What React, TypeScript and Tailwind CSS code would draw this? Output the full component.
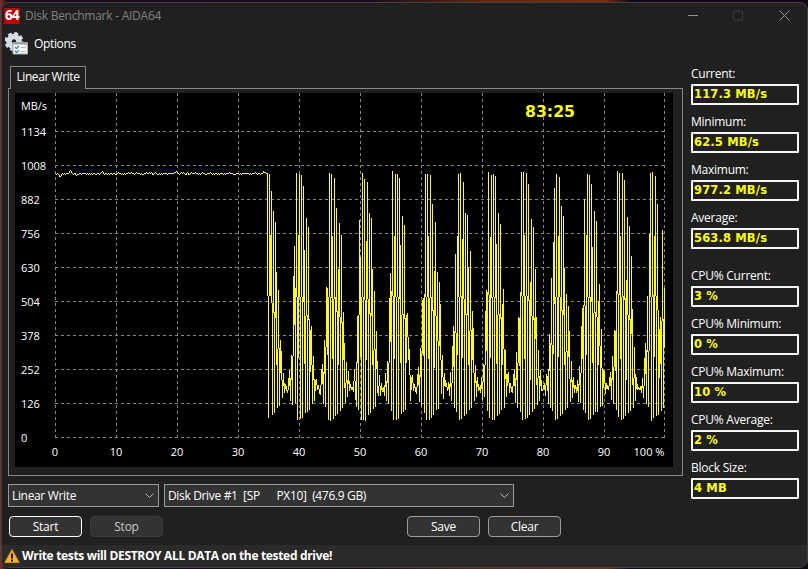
// y position of the graph for every pixel column, starting at x = 55
const steady: number[] = [
  173, 174, 173, 174, 176, 177, 174, 173, 174, 173, 174, 173, 173, 174, 172, 170, 172, 173, 174, 173,
  173, 176, 174, 174, 173, 173, 174, 173, 173, 173, 173, 174, 173, 174, 173, 174, 173, 174, 173, 173,
  174, 174, 173, 173, 174, 173, 172, 171, 173, 174, 173, 173, 174, 173, 174, 173, 173, 174, 173, 173,
  174, 174, 173, 172, 173, 173, 174, 173, 174, 173, 174, 173, 173, 172, 174, 173, 172, 174, 173, 174,
  173, 172, 174, 173, 173, 174, 173, 174, 175, 173, 173, 172, 174, 173, 172, 173, 172, 174, 175, 173,
  172, 173, 174, 175, 173, 174, 173, 174, 173, 173, 173, 173, 174, 173, 173, 173, 173, 173, 174, 172,
  173, 171, 173, 173, 174, 173, 172, 173, 172, 173, 175, 174, 172, 174, 175, 173, 172, 173, 173, 174,
  172, 174, 173, 174, 173, 174, 173, 172, 173, 173, 174, 175, 173, 173, 174, 172, 173, 174, 173, 174,
  173, 173, 174, 173, 174, 173, 173, 173, 174, 173, 174, 173, 173, 174, 172, 173, 173, 173, 174, 174,
  174, 173, 173, 173, 174, 173, 174, 173, 173, 173, 173, 173, 173, 173, 174, 173, 174, 173, 173, 174,
  172, 173, 174, 173, 173, 174, 173, 174, 171, 173, 172, 173,
];

const bursts: number[] = [
  173, 418, 174, 296, 191, 415, 211, 413, 222, 321, 408, 290, 406, 340, 361, 398, 373, 393, 384, 388,
  393, 386, 370, 401, 355, 405, 306, 246, 403, 173, 420, 296, 174, 419, 175, 418, 186, 314, 413, 218,
  412, 227, 410, 333, 326, 404, 356, 401, 381, 379, 390, 385, 392, 395, 374, 364, 404, 340, 407, 287,
  289, 420, 173, 421, 174, 298, 419, 178, 416, 208, 414, 315, 223, 411, 235, 408, 312, 373, 403, 362,
  397, 371, 391, 384, 390, 387, 392, 369, 393, 407, 316, 410, 220, 293, 420, 173, 420, 179, 421, 299,
  182, 415, 213, 413, 218, 320, 409, 291, 407, 331, 390, 396, 375, 396, 383, 392, 387, 396, 373, 401,
  361, 404, 322, 273, 411, 171, 420, 298, 174, 420, 174, 419, 178, 312, 414, 216, 412, 225, 410, 316,
  313, 360, 349, 401, 378, 375, 391, 384, 390, 394, 380, 367, 402, 348, 406, 302, 298, 413, 174, 420,
  174, 298, 420, 175, 418, 204, 415, 320, 222, 410, 272, 409, 282, 326, 394, 355, 399, 373, 387, 383,
  391, 382, 396, 372, 401, 365, 326, 408, 254, 412, 298, 174, 420, 173, 419, 296, 182, 416, 213, 414,
  215, 319, 410, 251, 408, 311, 344, 401, 365, 397, 377, 391, 387, 393, 377, 400, 364, 397, 332, 290,
  411, 172, 418, 298, 175, 420, 174, 420, 176, 312, 416, 213, 414, 224, 410, 319, 289, 408, 350, 397,
  375, 372, 393, 383, 390, 393, 379, 369, 403, 352, 408, 317, 319, 412, 172, 420, 172, 298, 419, 173,
  418, 184, 415, 345, 219, 412, 227, 409, 269, 365, 405, 350, 401, 370, 390, 391, 387, 383, 396, 374,
  378, 404, 334, 408, 278, 411, 296, 188, 420, 174, 419, 295, 177, 416, 206, 414, 216, 320, 410, 294,
  408, 306, 355, 402, 361, 398, 377, 393, 385, 393, 380, 402, 366, 403, 343, 308, 410, 199, 413, 296,
  174, 420, 175, 419, 184, 310, 415, 211, 412, 221, 412, 318, 284, 407, 329, 406, 370, 371, 394, 383,
  387, 390, 382, 372, 400, 356, 404, 330, 332, 410, 171, 417, 173, 298, 420, 173, 419, 180, 416, 343,
  217, 413, 226, 411, 256, 362, 408, 347, 401, 377, 390, 387, 390, 386, 393, 378, 398, 373, 343, 404,
  296, 407, 295, 173, 421, 172, 418, 296, 176, 416, 204, 415, 340, 317, 411, 230, 408, 288,
];

const samples = [...steady, ...bursts];

// one vertical run per column, meeting its neighbours half way
const graph = samples
  .map((y, i) => {
    const before = Math.round((y + (samples[i - 1] ?? y)) / 2);
    const after = Math.round((y + (samples[i + 1] ?? y)) / 2);
    const top = Math.min(y, before, after);
    const bottom = Math.max(y, before, after);
    return `M${55.5 + i} ${top}V${Math.max(bottom, top + 1)}`;
  })
  .join('');

const columns = [55, 116, 177, 238, 299, 360, 421, 482, 543, 604, 664];
const speeds = [1134, 1008, 882, 756, 630, 504, 378, 252, 126, 0];
const percents = ['0', '10', '20', '30', '40', '50', '60', '70', '80', '90'];

const readings: { label: string; value: string; gap?: boolean }[] = [
  { label: 'Current:', value: '117.3 MB/s' },
  { label: 'Minimum:', value: '62.5 MB/s' },
  { label: 'Maximum:', value: '977.2 MB/s' },
  { label: 'Average:', value: '563.8 MB/s' },
  { label: 'CPU% Current:', value: '3 %', gap: true },
  { label: 'CPU% Minimum:', value: '0 %' },
  { label: 'CPU% Maximum:', value: '10 %' },
  { label: 'CPU% Average:', value: '2 %' },
  { label: 'Block Size:', value: '4 MB' },
];

function Chart() {
  return (
    <svg
      className="block h-[374px] w-[658px] bg-black"
      viewBox="15 93 658 374"
      fontFamily="'Open Sans', 'Noto Sans', sans-serif"
      fontSize="11"
      letterSpacing="0"
    >
      <g stroke="#868686" strokeDasharray="3 3" shapeRendering="crispEdges">
        {columns.map((x) => (
          <path key={x} d={`M${x + 0.5} 93V438`} />
        ))}
        {speeds.map((speed, i) => (
          <path key={speed} d={`M55 ${131.5 + i * 34}H665`} />
        ))}
      </g>
      <path d={graph} stroke="#ffff00" shapeRendering="crispEdges" />
      <g fill="#fff">
        <text x="21" y="110" textLength="26" lengthAdjust="spacingAndGlyphs">MB/s</text>
        {speeds.map((speed, i) => (
          <text key={speed} x="21" y={136 + i * 34}>{speed}</text>
        ))}
        {percents.map((percent, i) => (
          <text key={percent} x={55 + i * 61} y="456" textAnchor="middle">{percent}</text>
        ))}
        <text x="633.5" y="456" textLength="31" lengthAdjust="spacingAndGlyphs">100 %</text>
      </g>
      <text
        x="525"
        y="117"
        fill="#ffff00"
        fontFamily="'DejaVu Sans', sans-serif"
        fontSize="16"
        fontWeight="700"
        textLength="50"
        lengthAdjust="spacingAndGlyphs"
      >
        83:25
      </text>
    </svg>
  );
}

function OptionsIcon() {
  return (
    <svg className="h-6 w-6" viewBox="0 0 24 24">
      <g fill="none" stroke="#d5dde2">
        <circle cx="9" cy="9.5" r="5" strokeWidth="5.600" />
        <circle cx="9" cy="9.5" r="8.2" strokeWidth="2.600" strokeDasharray="3.8 2.64" />
      </g>
      <path d="M8 10.5h14.500v11.500h-14.500z" fill="#f7f7f7" stroke="#a6a9ac" />
      <path d="M7.500 10h15.500v2.500h-15.500z" fill="#9b9fa3" />
      <path
        d="m10 15 1.500 1.500 2.500-2.500M10 19l1.500 1.500 2.500-2.500"
        fill="none"
        stroke="#2186d0"
        strokeWidth="1.200"
      />
      <path d="M15.500 15.500h5.500M15.500 19.500h5.500" stroke="#b8b8b8" />
    </svg>
  );
}

function WarningIcon() {
  return (
    <svg className="h-4 w-4" viewBox="0 0 16 16">
      <path d="M8 1.500 15.200 14.500H.8z" fill="#fbb02f" stroke="#df8d13" strokeLinejoin="round" />
      <path d="M8 5.500v5M8 11.500v2" stroke="#151515" strokeWidth="2" />
    </svg>
  );
}

function Select({ children, className }: { children: string; className: string }) {
  return (
    <div
      className={`flex h-[23px] items-center justify-between border border-[#9b9b9b] bg-[#333] pr-1 pl-[3px] tracking-[-0.34px] ${className}`}
    >
      <span className="whitespace-pre">{children}</span>
      <svg className="h-[5px] w-[9px]" viewBox="0 0 9 5" fill="none" stroke="#b8b8b8">
        <path d="m.5.5 4 4 4-4" />
      </svg>
    </div>
  );
}

function Button({ children, className }: { children: string; className: string }) {
  return (
    <button
      type="button"
      className={`h-[21px] w-[73px] rounded border bg-[#333] text-center leading-[19px] ${className}`}
    >
      {children}
    </button>
  );
}

export default function App() {
  return (
    <div className="h-[569px] w-[808px] overflow-hidden bg-[linear-gradient(90deg,#7a3430_0%,#1a0b18_1%,#160a1c_45%,#64260e_60%,#7a2d10_75%,#12081a_78%)] pt-[2px] font-['Open_Sans','Noto_Sans',sans-serif] text-[12px] tracking-[-0.25px] text-white">
      <div className="ml-px flex h-[566px] w-[807px] flex-col overflow-hidden rounded-lg border border-[#404040] bg-[#202020]">
        <header className="flex h-[26px] shrink-0 items-center pl-[2px]">
          <span className="h-4 w-4 bg-[#c00000] text-center text-[13.5px] leading-[14px] font-bold tracking-[-0.7px]">
            64
          </span>
          <h1 className="ml-[5px] text-[#808080]">Disk Benchmark - AIDA64</h1>
          <svg
            className="mr-[16px] mb-[2px] ml-auto h-[11px] w-[103px]"
            viewBox="0 0 103 11"
            fill="none"
            stroke="#929292"
          >
            <path d="M0 5.500h10" />
            <rect x="45.500" y="1" width="9" height="9" rx="1" stroke="#3c3c3c" />
            <path d="m91.500.500 10 10m0-10-10 10" />
          </svg>
        </header>

        <nav className="flex h-[37px] shrink-0 pt-[3px] pl-[3px]">
          <OptionsIcon />
          <span className="ml-[5px] leading-[24px] tracking-[-0.35px]">Options</span>
        </nav>

        <main className="flex h-[410px] shrink-0 pl-[6px]">
          <section className="w-[675px]">
            <div className="relative ml-[2px] h-[23px] w-[76px] border border-b-0 border-[#828790] bg-[#202020] text-center leading-[20px] tracking-[-0.42px]">
              Linear Write
            </div>
            <div className="-mt-px h-[388px] border border-[#828790] pt-1 pl-[6px]">
              <Chart />
            </div>
          </section>

          <aside className="ml-[8px] w-[108px]">
            {readings.map(({ label, value, gap }) => (
              <div key={label} className={gap ? 'mt-[10px] h-12' : 'h-12'}>
                <p className="h-[18px] leading-[16px]">{label}</p>
                <p className="h-[21px] rounded-[1px] border-2 border-[#f5f5f5] bg-[#202020] pl-[1px] font-['DejaVu_Sans',sans-serif] text-[11.5px] leading-[17px] font-bold tracking-[0.15px] text-[#ffff00]">
                  {value}
                </p>
              </div>
            ))}
          </aside>
        </main>

        <section className="mt-[8px] flex gap-[5px] pl-[6px]">
          <Select className="w-[151px]">Linear Write</Select>
          <Select className="w-[350px]">{'Disk Drive #1  [SP      PX10]  (476.9 GB)'}</Select>
        </section>

        <section className="mt-[9px] flex gap-2 pl-[7px]">
          <Button className="border-white">Start</Button>
          <Button className="border-[#3c3c3c] text-[#c8c8c8]">Stop</Button>
          <Button className="ml-[236px] border-[#9b9b9b]">Save</Button>
          <Button className="border-[#9b9b9b]">Clear</Button>
        </section>

        <footer className="mt-auto flex h-[22px] shrink-0 items-center bg-[#2a2a2a] pl-[2px] font-bold tracking-[-0.33px]">
          <WarningIcon />
          <span className="ml-[2px]">Write tests will DESTROY ALL DATA on the tested drive!</span>
        </footer>
      </div>
    </div>
  );
}
